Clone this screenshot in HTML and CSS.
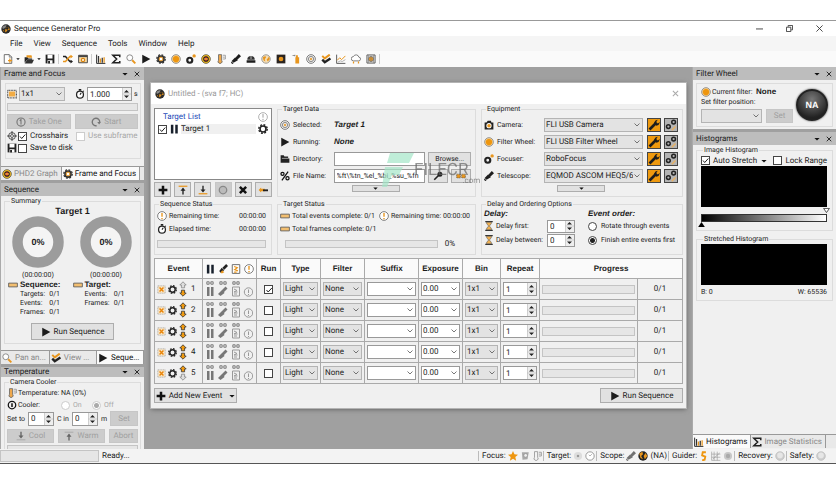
FILE: index.html
```html
<!DOCTYPE html>
<html lang="en">
<head>
<meta charset="utf-8">
<title>Sequence Generator Pro</title>
<link rel="stylesheet" href="styles.css">
</head>
<body>
<svg class="sprite" aria-hidden="true">
  <symbol id="logo" viewBox="0 0 16 16"><circle cx="8" cy="8" r="7.500" fill="#2b2b2b"/><path d="M2 5a7 7 0 0 1 7-3L7 6 3 8z" fill="#888"/><path d="M3 10l4-1 2-4 4 1 1 3-4 1-2 3-4-1z" fill="#e8961e"/><circle cx="10" cy="7" r="2" fill="#222"/><circle cx="5.500" cy="11" r="1.500" fill="#222"/></symbol>
  <symbol id="new" viewBox="0 0 16 16"><path d="M2 1h8l4 4v10H2z" fill="#fff" stroke="#555" stroke-width="1.300"/><path d="M10 1v4h4" fill="none" stroke="#555"/><path d="M11 7v7M8 10.500h6.500" stroke="#e8961e" stroke-width="2"/></symbol>
  <symbol id="open" viewBox="0 0 16 16"><path d="M1 14V5h5l1 2h6v2H5z" fill="#222"/><path d="M4 5V2h8l1 4H8z" fill="#e8961e"/><path d="M5 9h11l-3 6H1z" fill="#333"/></symbol>
  <symbol id="folder" viewBox="0 0 16 16"><path d="M1 14V2h5l1 2h6v3h2v7z" fill="#222"/><path d="M3 7h10" stroke="#ddd"/></symbol>
  <symbol id="save" viewBox="0 0 16 16"><path d="M1 1h14v14H1z" fill="#222"/><path d="M4 1h8v6H4zM4 10h8v5H4z" fill="#fff"/><path d="M5 11h3v4H5z" fill="#222"/></symbol>
  <symbol id="shuffle" viewBox="0 0 16 16"><path d="M0 4h4l7 8h3" fill="none" stroke="#222" stroke-width="2.500"/><path d="M0 12h4l7-8h3" fill="none" stroke="#e8961e" stroke-width="2.500"/><path d="M12 1l4 3-4 3z" fill="#e8961e"/><path d="M12 9l4 3-4 3z" fill="#222"/></symbol>
  <symbol id="options" viewBox="0 0 16 16"><path d="M1 2h14v12H1z" fill="#f6d9a3" stroke="#444" stroke-width="1.500"/><path d="M1 2h14v3H1z" fill="#444"/><circle cx="8" cy="9.500" r="2.600" fill="#fff" stroke="#d98410" stroke-width="2"/></symbol>
  <symbol id="bars" viewBox="0 0 16 16"><path d="M1 1v14h14" fill="none" stroke="#222" stroke-width="1.500"/><path d="M4 14V3M10 14V6" stroke="#333" stroke-width="2"/><path d="M7 14V7M13 14V5" stroke="#e8961e" stroke-width="2"/></symbol>
  <symbol id="sigma" viewBox="0 0 16 16"><path d="M14 5V2H3l6 6-6 6h11v-3" fill="none" stroke="#222" stroke-width="2.500"/></symbol>
  <symbol id="search" viewBox="0 0 16 16"><circle cx="6" cy="6" r="4.700" fill="#fff" stroke="#888" stroke-width="1.500"/><path d="M10 10l5 5" stroke="#e8961e" stroke-width="3"/></symbol>
  <symbol id="play" viewBox="0 0 16 16"><path d="M2 1l13 7-13 7z" fill="#1c1c1c"/></symbol>
  <symbol id="gear" viewBox="0 0 16 16"><circle cx="8" cy="8" r="6.800" fill="none" stroke="#222" stroke-width="2.200" stroke-dasharray="3 2.340"/><circle cx="8" cy="8" r="4.800" fill="none" stroke="#222" stroke-width="2.600"/></symbol>
  <symbol id="gearo" viewBox="0 0 16 16"><circle cx="8" cy="8" r="6.800" fill="none" stroke="#333" stroke-width="2" stroke-dasharray="3 2.340"/><circle cx="8" cy="8" r="4.700" fill="#fff" stroke="#333" stroke-width="3"/><circle cx="8" cy="8" r="3" fill="#fff" stroke="#e8961e" stroke-width="1.600"/></symbol>
  <symbol id="disc" viewBox="0 0 16 16"><circle cx="8" cy="8" r="7" fill="#f5cf90" stroke="#888" stroke-width="1.300"/><circle cx="8" cy="8" r="5" fill="#ee960f"/></symbol>
  <symbol id="focuser" viewBox="0 0 16 16"><circle cx="6" cy="10" r="4" fill="none" stroke="#222" stroke-width="3.500"/><circle cx="13" cy="3" r="2.700" fill="#e8961e"/></symbol>
  <symbol id="phd" viewBox="0 0 16 16"><circle cx="8" cy="8" r="7" fill="#f4b81e" stroke="#554" stroke-width="1.200"/><circle cx="8" cy="8" r="3.600" fill="#d33" stroke="#222" stroke-width="1.800"/><path d="M5 8h6" stroke="#ffd23a" stroke-width="1.600"/></symbol>
  <symbol id="thermo" viewBox="0 0 16 16"><path d="M4 1h5v9l1 3-3.500 2.500L3 13l1-3z" fill="#f0a94c" stroke="#666" stroke-width="1.300"/><path d="M11 2h4M11 5h3M11 8h4M15 2v6" fill="none" stroke="#888" stroke-width="1.200"/></symbol>
  <symbol id="scope" viewBox="0 0 16 16"><path d="M12.500 0L16 3.500 10 9 7 6zM6.500 5.500l4.500 4.500-7 4-3-3zM1 12l3 3-2 1-2-2z" fill="#1d1d1d"/></symbol>
  <symbol id="dome" viewBox="0 0 16 16"><path d="M2 9a6 6 0 0 1 12 0z" fill="#333"/><path d="M8 3v5" stroke="#bbb" stroke-width="1.500"/><path d="M1 10h14v4H1z" fill="#1c1c1c"/></symbol>
  <symbol id="globe" viewBox="0 0 16 16"><circle cx="8" cy="8" r="6.800" fill="#f4ddb5" stroke="#999" stroke-width="1.500"/><path d="M3 5l4-2 1 3-2 2 1 4-3-2zM9 9l4-5 1 4-3 4z" fill="#e8961e"/></symbol>
  <symbol id="earth" viewBox="0 0 16 16"><circle cx="8" cy="8" r="7.500" fill="#222"/><path d="M2 4l5-3 1 4-3 3 3 5-4-2zM9 8l3-5 3 5-4 5z" fill="#e8961e"/></symbol>
  <symbol id="flat" viewBox="0 0 16 16"><path d="M1 1h14v14H1z" fill="#2a2420"/><circle cx="8" cy="8" r="3.700" fill="#e8961e"/></symbol>
  <symbol id="bottle" viewBox="0 0 16 16"><path d="M7 5h6v10H7zM8 2h3v3H8z" fill="#e8961e"/><path d="M1 2l6-1v3z" fill="#888"/></symbol>
  <symbol id="target" viewBox="0 0 16 16"><circle cx="8" cy="8" r="7" fill="#eee" stroke="#666" stroke-width="1.300"/><circle cx="8" cy="8" r="4.200" fill="none" stroke="#777" stroke-width="1.300"/><circle cx="8" cy="8" r="2" fill="#e8a84a"/></symbol>
  <symbol id="checks" viewBox="0 0 16 16"><path d="M2 9l4 4 9-6" fill="none" stroke="#222" stroke-width="3.800"/><path d="M2 3l4 4 8-6" fill="none" stroke="#e8961e" stroke-width="3.200"/></symbol>
  <symbol id="graph" viewBox="0 0 16 16"><path d="M1 1v14h14" fill="none" stroke="#555" stroke-width="1.500"/><path d="M2 10l4-4 3 3 6-6" fill="none" stroke="#e8961e" stroke-width="1.600"/><path d="M3 13l4-2 3 1 5-3" fill="none" stroke="#888"/></symbol>
  <symbol id="cloud" viewBox="0 0 16 16"><path d="M4 11a3.500 3.500 0 0 1 0-7 4.500 4.500 0 0 1 8.500 1A3 3 0 0 1 12 11z" fill="#fff" stroke="#666" stroke-width="1.300"/><path d="M4 12v3M12 12v3" stroke="#e8961e" stroke-width="2"/></symbol>
  <symbol id="safe" viewBox="0 0 16 16"><path d="M1.500 1.500h13v13h-13z" fill="#eee" stroke="#555" stroke-width="1.500"/><circle cx="8" cy="8" r="4" fill="#e8961e" stroke="#777" stroke-width="1.500"/><path d="M8 4v8M4 2v12M12 2v12" stroke="#777"/></symbol>
  <symbol id="chip" viewBox="0 0 16 16"><path d="M1 2h14v12H1z" fill="none" stroke="#555" stroke-width="2" stroke-dasharray="1.500 1"/><path d="M3 4h10v8H3z" fill="#f2ac45"/></symbol>
  <symbol id="watch" viewBox="0 0 16 16"><circle cx="8" cy="9" r="5.500" fill="#fff" stroke="#222" stroke-width="2"/><path d="M8 9l2-3M6 1h4M8 1v2M13 3l1 1" stroke="#222" stroke-width="1.800"/></symbol>
  <symbol id="one" viewBox="0 0 16 16"><circle cx="8" cy="8" r="6.500" fill="none" stroke="#777" stroke-width="1.800"/><path d="M6 6l2-2v8" fill="none" stroke="#777" stroke-width="1.700"/></symbol>
  <symbol id="loop" viewBox="0 0 16 16"><path d="M9 14a6 6 0 1 1 5-6" fill="none" stroke="#777" stroke-width="2.200"/><path d="M10 8h6l-3 4z" fill="#777"/></symbol>
  <symbol id="cross" viewBox="0 0 16 16"><circle cx="8" cy="8" r="5.500" fill="none" stroke="#333" stroke-width="1.300"/><circle cx="8" cy="8" r="2.300" fill="none" stroke="#333"/><path d="M8 0v6M8 10v6M0 8h6M10 8h6" stroke="#333" stroke-width="1.300"/></symbol>
  <symbol id="close" viewBox="0 0 16 16"><path d="M2 2l12 12M14 2L2 14" stroke="currentColor" stroke-width="2.400"/></symbol>
  <symbol id="down" viewBox="0 0 16 16"><path d="M1 5h14l-7 7z" fill="#111"/></symbol>
  <symbol id="event" viewBox="0 0 16 16"><path d="M1 5h14v6H1z" fill="#f3bf70" stroke="#555" stroke-width="1.300"/></symbol>
  <symbol id="alert" viewBox="0 0 16 16"><circle cx="8" cy="8" r="7" fill="none" stroke="#999" stroke-width="1.200"/><path d="M8 3v6M8 11v2" stroke="#999" stroke-width="1.500"/></symbol>
  <symbol id="alerto" viewBox="0 0 16 16"><circle cx="8" cy="8" r="7" fill="#fff" stroke="#666" stroke-width="1.300"/><path d="M8 3v6M8 11v2" stroke="#e8961e" stroke-width="2.200"/></symbol>
  <symbol id="pause" viewBox="0 0 16 16"><path d="M3 1h4v14H3zM10 1h4v14h-4z" fill="#18202c"/></symbol>
  <symbol id="plus" viewBox="0 0 16 16"><path d="M8 1v14M1 8h14" stroke="#111" stroke-width="4"/></symbol>
  <symbol id="times" viewBox="0 0 16 16"><path d="M3 3l10 10M13 3L3 13" stroke="#111" stroke-width="4"/></symbol>
  <symbol id="totop" viewBox="0 0 16 16"><path d="M1 2h14" stroke="#e8961e" stroke-width="2"/><path d="M8 15V6" stroke="#222" stroke-width="2.200"/><path d="M4 9l4-5 4 5z" fill="#222"/></symbol>
  <symbol id="tobottom" viewBox="0 0 16 16"><path d="M1 14h14" stroke="#e8961e" stroke-width="2"/><path d="M8 1v8" stroke="#222" stroke-width="2.200"/><path d="M4 7l4 5 4-5z" fill="#222"/></symbol>
  <symbol id="ring" viewBox="0 0 16 16"><circle cx="8" cy="8" r="6" fill="#bbb" stroke="#888" stroke-width="2"/></symbol>
  <symbol id="rename" viewBox="0 0 16 16"><path d="M1 8l4-4v8z" fill="#e8961e"/><path d="M4 6h7v4H4z" fill="#e8961e"/><path d="M8 7h8v3H8z" fill="#222"/></symbol>
  <symbol id="percent" viewBox="0 0 16 16"><circle cx="4" cy="4.500" r="2.500" fill="none" stroke="#111" stroke-width="2"/><circle cx="12" cy="11.500" r="2.500" fill="none" stroke="#111" stroke-width="2"/><path d="M13 1L3 15" stroke="#111" stroke-width="2"/></symbol>
  <symbol id="camera" viewBox="0 0 16 16"><path d="M1 4h3l2-3h5l1 3h3v11H1z" fill="#222"/><circle cx="8" cy="9" r="4.200" fill="#fff"/><circle cx="8" cy="9" r="2.800" fill="#e8961e"/></symbol>
  <symbol id="wrench" viewBox="0 0 16 16"><path d="M2 14l8-8" stroke="#1d1d1d" stroke-width="3.500"/><path d="M13 1l-3 1-2 3 3 4 3-1 2-4-3 2-2-2z" fill="#1d1d1d"/></symbol>
  <symbol id="gears" viewBox="0 0 16 16"><circle cx="11.500" cy="4" r="2.500" fill="none" stroke="#222" stroke-width="2"/><circle cx="4.500" cy="10" r="2.500" fill="none" stroke="#222" stroke-width="2"/><path d="M9 15l5-5" stroke="#e8b060" stroke-width="2"/></symbol>
  <symbol id="hourglass" viewBox="0 0 16 16"><path d="M2 1h12M2 15h12" stroke="#333" stroke-width="2"/><path d="M4 2h8c0 4-3 4-3 6s3 2 3 6H4c0-4 3-4 3-6S4 6 4 2z" fill="#f0b050" stroke="#555"/></symbol>
  <symbol id="script" viewBox="0 0 16 16"><path d="M2 1h12v14H2z" fill="#fff" stroke="#666" stroke-width="1.500"/><path d="M5 4l5 2-4 3 5 2M5 13h4" fill="none" stroke="#e8961e" stroke-width="2"/></symbol>
  <symbol id="slew" viewBox="0 0 16 16"><path d="M13 0l3 3-6 6-3-3zM6 6l4 4-6 4-2-3z" fill="#222"/><path d="M7 10l3 3-4 2-2-2z" fill="#e8961e"/></symbol>
  <symbol id="del" viewBox="0 0 16 16"><path d="M1.500 1.500h13v13h-13z" fill="#fbe8c8" stroke="#888" stroke-dasharray="2 1"/><path d="M4.500 4.500l7 7M11.500 4.500l-7 7" stroke="#e8850a" stroke-width="2.600"/></symbol>
  <symbol id="updown" viewBox="0 0 10 20"><path d="M5 1L1 5h2v3.500h4V5h2zM5 19l4-4H7v-3.500H3V15H1z" fill="#f09a10" stroke="#333"/></symbol>
  <symbol id="onlydown" viewBox="0 0 10 20"><path d="M5 1L1 5h2v3.500h4V5h2z" fill="#ddd" stroke="#888"/><path d="M5 19l4-4H7v-3.500H3V15H1z" fill="#f09a10" stroke="#333"/></symbol>
  <symbol id="onlyup" viewBox="0 0 10 20"><path d="M5 1L1 5h2v3.500h4V5h2z" fill="#f09a10" stroke="#333"/><path d="M5 19l4-4H7v-3.500H3V15H1z" fill="#ddd" stroke="#888"/></symbol>
  <symbol id="flags" viewBox="0 0 48 16">
    <g fill="none" stroke="#888" stroke-width="1.200"><circle cx="3" cy="2" r="1.300"/><circle cx="7" cy="2" r="1.300"/><circle cx="16" cy="2" r="1.300"/><circle cx="20" cy="2" r="1.300"/><circle cx="29" cy="2" r="1.300"/><circle cx="33" cy="2" r="1.300"/></g>
    <path d="M2 6h2.500v9H2zM6 6h2.500v9H6zM20.500 5.500l2 2-3.500 3.500 .5 1-4 3-2.500-2 4-4z" fill="#777"/>
    <path d="M27.500 6h7v9h-7zM29 8l3 1.500-3 1.500h3.500M29 13h3" fill="none" stroke="#999"/>
    <circle cx="43.500" cy="11" r="4.200" fill="none" stroke="#999"/><path d="M43.500 8.500V12M43.500 13v1" stroke="#999"/></symbol>
  <symbol id="star" viewBox="0 0 16 16"><path d="M8 0l2.300 5.300 5.700.5-4.300 3.800 1.300 5.900L8 12.400l-5 3.100 1.300-5.900L0 5.800l5.700-.5z" fill="#ee960f"/></symbol>
  <symbol id="graycam" viewBox="0 0 16 16"><path d="M3 2h11l-2 11-8 1z" fill="#aaa"/><circle cx="9" cy="7" r="3" fill="#eee" stroke="#888"/></symbol>
  <symbol id="graythermo" viewBox="0 0 16 16"><path d="M4 1h5v9l1 3-3.500 2.500L3 13l1-3zM11 2h4v6h-4M11 5h3" fill="none" stroke="#999" stroke-width="1.400"/></symbol>
  <symbol id="graydot" viewBox="0 0 16 16"><circle cx="8" cy="8" r="6.500" fill="#ddd"/><circle cx="8" cy="8" r="2" fill="#999"/></symbol>
  <symbol id="graystar" viewBox="0 0 16 16"><circle cx="8" cy="8" r="6.500" fill="#c8c8c8"/><circle cx="8" cy="8" r="3.500" fill="#aaa"/></symbol>
  <symbol id="clock" viewBox="0 0 16 16"><circle cx="8" cy="8" r="6.700" fill="#fff" stroke="#888" stroke-width="1.300"/><path d="M8 8l3-3M8 8L6 6" stroke="#888"/></symbol>
  <symbol id="guide" viewBox="0 0 16 16"><path d="M11 2H6l-1 5 5 2-1 5-4 1" fill="none" stroke="#ee960f" stroke-width="3"/></symbol>
  <symbol id="grid" viewBox="0 0 16 16"><path d="M1 1v14h14M1 5h14M1 10h14M5 1v14M10 1v14M3 13L14 3" fill="none" stroke="#999"/></symbol>
  <symbol id="lamp" viewBox="0 0 16 16"><circle cx="8" cy="8" r="7" fill="#ccc" stroke="#bbb"/><circle cx="8" cy="7" r="4.500" fill="#e6e6e6"/></symbol>
  <symbol id="power" viewBox="0 0 16 16"><circle cx="8" cy="8" r="6" fill="none" stroke="#111" stroke-width="2"/><path d="M8 5v6" stroke="#111" stroke-width="2.400"/></symbol>
  <symbol id="tool" viewBox="0 0 16 16"><path d="M2 14l8-8" stroke="#222" stroke-width="2.500"/><circle cx="11" cy="5" r="4" fill="#222"/></symbol>
  <symbol id="glasses" viewBox="0 0 16 16"><path d="M1 5h6v6H1zM9 5h6v6H9z" fill="#e8961e" stroke="#555" stroke-dasharray="2 1"/></symbol>
  <symbol id="donut" viewBox="0 0 52 52"><circle cx="26" cy="26" r="20.500" fill="#f4f4f4" stroke="#9c9c9c" stroke-width="10.500"/></symbol>
</svg>

<div class="app">
  <header class="titlebar">
    <svg class="ic"><use href="#logo"/></svg><h1>Sequence Generator Pro</h1>
    <div class="winbtns">
      <button aria-label="Minimize"><svg viewBox="0 0 8 8"><path d="M0 4.500h8" stroke="#333"/></svg></button>
      <button aria-label="Restore"><svg viewBox="0 0 8 8"><path d="M.5 2.500h5v5h-5zM2.500 2V.5h5v5H6" fill="none" stroke="#333"/></svg></button>
      <button aria-label="Close"><svg viewBox="0 0 8 8"><path d="M.5.5l7 7M7.500.5l-7 7" stroke="#333"/></svg></button>
    </div>
  </header>
  <nav class="menu"><a href="#">File</a><a href="#">View</a><a href="#">Sequence</a><a href="#">Tools</a><a href="#">Window</a><a href="#">Help</a></nav>
  <div class="toolbar">
    <button aria-label="New"><svg class="ic"><use href="#new"/></svg></button><button class="drop" aria-label="New menu"><svg><use href="#down"/></svg></button>
    <button aria-label="Open"><svg class="ic"><use href="#open"/></svg></button><button class="drop" aria-label="Open menu"><svg><use href="#down"/></svg></button>
    <button aria-label="Save"><svg class="ic"><use href="#save"/></svg></button><i class="sep"></i>
    <button aria-label="Equipment"><svg class="ic"><use href="#shuffle"/></svg></button>
    <button aria-label="Options"><svg class="ic"><use href="#options"/></svg></button><i class="sep"></i>
    <button aria-label="Histogram"><svg class="ic"><use href="#bars"/></svg></button>
    <button aria-label="Statistics"><svg class="ic"><use href="#sigma"/></svg></button>
    <button aria-label="Zoom"><svg class="ic"><use href="#search"/></svg></button>
    <button aria-label="Run"><svg class="ic"><use href="#play"/></svg></button>
    <button aria-label="Frame and focus"><svg class="ic"><use href="#gearo"/></svg></button>
    <button aria-label="Filter wheel"><svg class="ic"><use href="#disc"/></svg></button>
    <button aria-label="Focuser"><svg class="ic"><use href="#focuser"/></svg></button>
    <button aria-label="PHD2"><svg class="ic"><use href="#phd"/></svg></button>
    <button aria-label="Temperature"><svg class="ic"><use href="#thermo"/></svg></button>
    <button aria-label="Telescope"><svg class="ic"><use href="#scope"/></svg></button>
    <button aria-label="Observatory"><svg class="ic"><use href="#dome"/></svg></button>
    <button aria-label="Rotator"><svg class="ic"><use href="#globe"/></svg></button>
    <button aria-label="Flat box"><svg class="ic"><use href="#flat"/></svg></button>
    <button aria-label="Dew heater"><svg class="ic"><use href="#bottle"/></svg></button>
    <button aria-label="Target"><svg class="ic"><use href="#target"/></svg></button>
    <button aria-label="View"><svg class="ic"><use href="#checks"/></svg></button>
    <button aria-label="Graph"><svg class="ic"><use href="#graph"/></svg></button>
    <button aria-label="Weather"><svg class="ic"><use href="#cloud"/></svg></button>
    <button aria-label="Safety"><svg class="ic"><use href="#safe"/></svg></button><i class="sep"></i>
  </div>

  <main class="work">
    <aside class="dock">
      <section class="pane">
        <h2 class="cap">Frame and Focus <button aria-label="Pane menu"><svg><use href="#down"/></svg></button><button aria-label="Close pane"><svg><use href="#close"/></svg></button></h2>
        <div class="frame box">
          <div class="line top"><svg class="ic"><use href="#chip"/></svg><select class="bin" aria-label="Binning"><option>1x1</option></select><svg class="ic"><use href="#watch"/></svg><input class="exp" type="number" step="any" value="1.000" aria-label="Exposure"><span>s</span></div>
          <progress value="0" max="1"></progress>
          <div class="pair"><button class="btn off" disabled><svg class="ic"><use href="#one"/></svg>Take One</button><button class="btn off" disabled><svg class="ic"><use href="#loop"/></svg>Start</button></div>
          <div class="checks"><svg class="ic"><use href="#cross"/></svg><label><input type="checkbox" checked>Crosshairs</label><label class="dim"><input type="checkbox" disabled>Use subframe</label></div>
          <div class="checks"><svg class="ic"><use href="#save"/></svg><label><input type="checkbox">Save to disk</label></div>
        </div>
        <div class="tabs"><button><svg class="ic"><use href="#phd"/></svg>PHD2 Graph</button><button class="on"><svg class="ic"><use href="#gearo"/></svg>Frame and Focus</button></div>
      </section>
      <section class="pane">
        <h2 class="cap">Sequence <button aria-label="Pane menu"><svg><use href="#down"/></svg></button><button aria-label="Close pane"><svg><use href="#close"/></svg></button></h2>
        <fieldset class="summary"><legend>Summary</legend>
          <h3>Target 1</h3>
          <div class="dials">
            <figure><div class="dial"><svg><use href="#donut"/></svg><b>0%</b></div><figcaption>(00:00:00)</figcaption></figure>
            <figure><div class="dial"><svg><use href="#donut"/></svg><b>0%</b></div><figcaption>(00:00:00)</figcaption></figure>
          </div>
          <div class="counts">
            <dl><dt><svg class="ic"><use href="#event"/></svg>Sequence:</dt><dd>Targets: <span>0/1</span></dd><dd>Events: <span>0/1</span></dd><dd>Frames: <span>0/1</span></dd></dl>
            <dl><dt><svg class="ic"><use href="#event"/></svg>Target:</dt><dd>Events: <span>0/1</span></dd><dd>Frames: <span>0/1</span></dd></dl>
          </div>
          <button class="btn run"><svg class="ic"><use href="#play"/></svg>Run Sequence</button>
        </fieldset>
        <div class="tabs three"><button><svg class="ic"><use href="#search"/></svg>Pan an...</button><button><svg class="ic"><use href="#checks"/></svg>View ...</button><button class="on"><svg class="ic"><use href="#play"/></svg>Seque...</button></div>
      </section>
      <section class="pane last">
        <h2 class="cap">Temperature <button aria-label="Pane menu"><svg><use href="#down"/></svg></button><button aria-label="Close pane"><svg><use href="#close"/></svg></button></h2>
        <fieldset class="temp"><legend>Camera Cooler</legend>
          <div class="line"><svg class="ic"><use href="#thermo"/></svg>Temperature: NA (0%)</div>
          <div class="line cooler"><svg class="ic"><use href="#power"/></svg><span>Cooler:</span><label class="dim"><input type="radio" name="cool" disabled>On</label><label class="dim"><input type="radio" name="cool" disabled checked>Off</label></div>
          <div class="line set"><label for="deg">Set to</label><input id="deg" type="number" value="0"><label for="mins">C in</label><input id="mins" type="number" value="0"><span>m</span><button class="btn off" disabled>Set</button></div>
          <div class="trio"><button class="btn off" disabled><svg class="ic gray"><use href="#tobottom"/></svg>Cool</button><button class="btn off" disabled><svg class="ic gray"><use href="#totop"/></svg>Warm</button><button class="btn off" disabled>Abort</button></div>
          <progress value="0" max="1"></progress>
        </fieldset>
      </section>
    </aside>

    <div class="desktop">
      <article class="win">
        <header><svg class="ic"><use href="#logo"/></svg><h2>Untitled - (sva f7; HC)</h2><button aria-label="Close sequence"><svg><use href="#close"/></svg></button></header>
        <div class="body">
          <div class="cols upper">
            <div class="targets">
              <div class="list">
                <div class="lhead"><span>Target List</span><svg class="ic"><use href="#alert"/></svg></div>
                <div class="litem"><input type="checkbox" checked aria-label="Enable Target 1"><svg class="ic"><use href="#pause"/></svg><span>Target 1</span><svg class="ic"><use href="#gear"/></svg></div>
              </div>
              <div class="lbtns"><button class="btn" aria-label="Add"><svg class="ic"><use href="#plus"/></svg></button><button class="btn" aria-label="Move up"><svg class="ic"><use href="#totop"/></svg></button><button class="btn" aria-label="Move down"><svg class="ic"><use href="#tobottom"/></svg></button><button class="btn off" aria-label="Reset" disabled><svg class="ic"><use href="#ring"/></svg></button><button class="btn" aria-label="Delete"><svg class="ic"><use href="#times"/></svg></button><button class="btn" aria-label="Rename"><svg class="ic"><use href="#rename"/></svg></button></div>
            </div>
            <fieldset class="data"><legend>Target Data</legend>
              <div class="row"><svg class="ic"><use href="#target"/></svg><span>Selected:</span><em>Target 1</em></div>
              <div class="row"><svg class="ic"><use href="#play"/></svg><span>Running:</span><em>None</em></div>
              <div class="row"><svg class="ic"><use href="#folder"/></svg><label for="dir">Directory:</label><input id="dir" type="text"><button class="btn browse">Browse...</button></div>
              <div class="row"><svg class="ic"><use href="#percent"/></svg><label for="fname">File Name:</label><input id="fname" type="text" value="%ft\%tn_%el_%bi_%su_%fn"><button class="btn sq" aria-label="Pattern key"><svg class="ic"><use href="#tool"/></svg></button><button class="btn sq" aria-label="Preview"><svg class="ic"><use href="#glasses"/></svg></button></div>
              <button class="btn more" aria-label="More target data"><svg><use href="#down"/></svg></button>
              <div class="mark"><svg viewBox="0 0 32 34"><path d="M8 0h24l-5 10H5zM3 14h18l-4 8H10L5 34H0z" fill="#a5e6c8"/></svg><strong>FILECR</strong><small>.com</small></div>
            </fieldset>
            <fieldset class="equip"><legend>Equipment</legend>
              <div class="row"><svg class="ic"><use href="#camera"/></svg><label for="cam">Camera:</label><select id="cam"><option>FLI USB Camera</option></select><button class="key" aria-label="Camera settings"><svg><use href="#wrench"/></svg></button><button class="cog" aria-label="Camera profile"><svg><use href="#gears"/></svg></button></div>
              <div class="row"><svg class="ic"><use href="#disc"/></svg><label for="fw">Filter Wheel:</label><select id="fw"><option>FLI USB Filter Wheel</option></select><button class="key" aria-label="Filter wheel settings"><svg><use href="#wrench"/></svg></button><button class="cog" aria-label="Filter wheel profile"><svg><use href="#gears"/></svg></button></div>
              <div class="row"><svg class="ic"><use href="#focuser"/></svg><label for="foc">Focuser:</label><select id="foc"><option>RoboFocus</option></select><button class="key" aria-label="Focuser settings"><svg><use href="#wrench"/></svg></button><button class="cog" aria-label="Focuser profile"><svg><use href="#gears"/></svg></button></div>
              <div class="row"><svg class="ic"><use href="#scope"/></svg><label for="tel">Telescope:</label><select id="tel"><option>EQMOD ASCOM HEQ5/6</option></select><button class="key" aria-label="Telescope settings"><svg><use href="#wrench"/></svg></button><button class="cog" aria-label="Telescope profile"><svg><use href="#gears"/></svg></button></div>
              <button class="btn more" aria-label="More equipment"><svg><use href="#down"/></svg></button>
            </fieldset>
          </div>
          <div class="cols lower">
            <fieldset class="status"><legend>Sequence Status</legend>
              <div class="stat"><svg class="ic"><use href="#alerto"/></svg><span>Remaining time:</span><span class="end">00:00:00</span></div>
              <div class="stat"><svg class="ic"><use href="#watch"/></svg><span>Elapsed time:</span><span class="end">00:00:00</span></div>
              <progress value="0" max="1"></progress>
            </fieldset>
            <fieldset class="status"><legend>Target Status</legend>
              <div class="stat"><svg class="ic"><use href="#event"/></svg><span>Total events complete: 0/1</span><svg class="ic end"><use href="#alerto"/></svg><span>Remaining time: 00:00:00</span></div>
              <div class="stat"><svg class="ic"><use href="#event"/></svg><span>Total frames complete: 0/1</span></div>
              <div class="prog"><progress value="0" max="1"></progress><span>0%</span></div>
            </fieldset>
            <fieldset class="delay"><legend>Delay and Ordering Options</legend>
              <div><h4>Delay:</h4>
                <div class="drow"><svg class="ic"><use href="#hourglass"/></svg><label for="d1">Delay first:</label><input id="d1" type="number" value="0"></div>
                <div class="drow"><svg class="ic"><use href="#hourglass"/></svg><label for="d2">Delay between:</label><input id="d2" type="number" value="0"></div></div>
              <div><h4>Event order:</h4>
                <label class="drow"><input type="radio" name="order">Rotate through events</label>
                <label class="drow"><input type="radio" name="order" checked>Finish entire events first</label></div>
            </fieldset>
          </div>
          <table>
            <colgroup><col class="c-ev"><col class="c-fl"><col class="c-run"><col class="c-type"><col class="c-fil"><col class="c-suf"><col class="c-exp"><col class="c-bin"><col class="c-rep"><col><col class="c-num"></colgroup>
            <thead><tr><th>Event</th><th><div class="hic"><svg class="ic"><use href="#pause"/></svg><svg class="ic"><use href="#slew"/></svg><svg class="ic"><use href="#script"/></svg><svg class="ic"><use href="#alerto"/></svg></div></th><th>Run</th><th>Type</th><th>Filter</th><th>Suffix</th><th>Exposure</th><th>Bin</th><th>Repeat</th><th colspan="2">Progress</th></tr></thead>
            <tbody>
              <tr><td><div class="ev"><svg class="ic"><use href="#del"/></svg><svg class="ic"><use href="#gear"/></svg><svg class="ud"><use href="#onlydown"/></svg>1</div></td><td><svg class="flags"><use href="#flags"/></svg></td><td><input type="checkbox" checked aria-label="Run event 1"></td><td><select aria-label="Type 1"><option>Light</option></select></td><td><select aria-label="Filter 1"><option>None</option></select></td><td><select class="w" aria-label="Suffix 1"><option></option></select></td><td><select class="w" aria-label="Exposure 1"><option>0.00</option></select></td><td><select aria-label="Bin 1"><option>1x1</option></select></td><td><input type="number" value="1" aria-label="Repeat 1"></td><td><progress value="0" max="1"></progress></td><td>0/1</td></tr>
              <tr><td><div class="ev"><svg class="ic"><use href="#del"/></svg><svg class="ic"><use href="#gear"/></svg><svg class="ud"><use href="#updown"/></svg>2</div></td><td><svg class="flags"><use href="#flags"/></svg></td><td><input type="checkbox" aria-label="Run event 2"></td><td><select aria-label="Type 2"><option>Light</option></select></td><td><select aria-label="Filter 2"><option>None</option></select></td><td><select class="w" aria-label="Suffix 2"><option></option></select></td><td><select class="w" aria-label="Exposure 2"><option>0.00</option></select></td><td><select aria-label="Bin 2"><option>1x1</option></select></td><td><input type="number" value="1" aria-label="Repeat 2"></td><td><progress value="0" max="1"></progress></td><td>0/1</td></tr>
              <tr><td><div class="ev"><svg class="ic"><use href="#del"/></svg><svg class="ic"><use href="#gear"/></svg><svg class="ud"><use href="#updown"/></svg>3</div></td><td><svg class="flags"><use href="#flags"/></svg></td><td><input type="checkbox" aria-label="Run event 3"></td><td><select aria-label="Type 3"><option>Light</option></select></td><td><select aria-label="Filter 3"><option>None</option></select></td><td><select class="w" aria-label="Suffix 3"><option></option></select></td><td><select class="w" aria-label="Exposure 3"><option>0.00</option></select></td><td><select aria-label="Bin 3"><option>1x1</option></select></td><td><input type="number" value="1" aria-label="Repeat 3"></td><td><progress value="0" max="1"></progress></td><td>0/1</td></tr>
              <tr><td><div class="ev"><svg class="ic"><use href="#del"/></svg><svg class="ic"><use href="#gear"/></svg><svg class="ud"><use href="#updown"/></svg>4</div></td><td><svg class="flags"><use href="#flags"/></svg></td><td><input type="checkbox" aria-label="Run event 4"></td><td><select aria-label="Type 4"><option>Light</option></select></td><td><select aria-label="Filter 4"><option>None</option></select></td><td><select class="w" aria-label="Suffix 4"><option></option></select></td><td><select class="w" aria-label="Exposure 4"><option>0.00</option></select></td><td><select aria-label="Bin 4"><option>1x1</option></select></td><td><input type="number" value="1" aria-label="Repeat 4"></td><td><progress value="0" max="1"></progress></td><td>0/1</td></tr>
              <tr><td><div class="ev"><svg class="ic"><use href="#del"/></svg><svg class="ic"><use href="#gear"/></svg><svg class="ud"><use href="#onlyup"/></svg>5</div></td><td><svg class="flags"><use href="#flags"/></svg></td><td><input type="checkbox" aria-label="Run event 5"></td><td><select aria-label="Type 5"><option>Light</option></select></td><td><select aria-label="Filter 5"><option>None</option></select></td><td><select class="w" aria-label="Suffix 5"><option></option></select></td><td><select class="w" aria-label="Exposure 5"><option>0.00</option></select></td><td><select aria-label="Bin 5"><option>1x1</option></select></td><td><input type="number" value="1" aria-label="Repeat 5"></td><td><progress value="0" max="1"></progress></td><td>0/1</td></tr>
            </tbody>
          </table>
          <footer><button class="btn add"><svg class="ic"><use href="#plus"/></svg>Add New Event<svg class="tri"><use href="#down"/></svg></button><button class="btn run"><svg class="ic"><use href="#play"/></svg>Run Sequence</button></footer>
        </div>
      </article>
    </div>

    <aside class="dock right">
      <section class="pane">
        <h2 class="cap">Filter Wheel <button aria-label="Pane menu"><svg><use href="#down"/></svg></button><button aria-label="Close pane"><svg><use href="#close"/></svg></button></h2>
        <div class="box wheel">
          <div><div class="cur"><svg class="ic"><use href="#disc"/></svg>Current filter: <b>None</b></div><label for="pos">Set filter position:</label><div class="setpos"><select id="pos"><option></option></select><button class="btn off" disabled>Set</button></div></div>
          <div class="knob">NA</div>
        </div>
      </section>
      <section class="pane last">
        <h2 class="cap">Histograms <button aria-label="Pane menu"><svg><use href="#down"/></svg></button><button aria-label="Close pane"><svg><use href="#close"/></svg></button></h2>
        <fieldset class="hist"><legend>Image Histogram</legend>
          <div class="opts"><label><input type="checkbox" checked>Auto Stretch</label><svg class="tri"><use href="#down"/></svg><label class="end"><input type="checkbox">Lock Range</label></div>
          <div class="plot"></div>
          <svg class="wht" viewBox="0 0 8 6"><path d="M.5.5h7L4 5.500z" fill="#fff" stroke="#333"/></svg>
          <div class="ramp"></div>
          <svg class="blk" viewBox="0 0 8 6"><path d="M4 0l4 6H0z"/></svg>
        </fieldset>
        <fieldset class="hist"><legend>Stretched Histogram</legend>
          <div class="plot"></div>
          <div class="bw"><span>B: 0</span><span>W: 65536</span></div>
        </fieldset>
        <div class="tabs foot"><button class="on"><svg class="ic"><use href="#bars"/></svg>Histograms</button><button><svg class="ic"><use href="#sigma"/></svg>Image Statistics</button></div>
      </section>
    </aside>
  </main>

  <footer class="statusbar">
    <progress value="0" max="1"></progress><span class="ready">Ready...</span>
    <div>Focus: <svg class="ic"><use href="#star"/></svg><svg class="ic"><use href="#graycam"/></svg><svg class="ic"><use href="#graythermo"/></svg></div>
    <div>Target: <svg class="ic"><use href="#graydot"/></svg><svg class="ic"><use href="#clock"/></svg></div>
    <div>Scope: <svg class="ic gray"><use href="#scope"/></svg><svg class="ic"><use href="#earth"/></svg>(NA)</div>
    <div>Guider: <svg class="ic"><use href="#guide"/></svg><svg class="ic"><use href="#grid"/></svg><svg class="ic"><use href="#graystar"/></svg></div>
    <div>Recovery: <svg class="ic"><use href="#lamp"/></svg></div>
    <div>Safety: <svg class="ic"><use href="#lamp"/></svg></div>
  </footer>
</div>
</body>
</html>
```
FILE: styles.css
```css
* { box-sizing: border-box; margin: 0; padding: 0; }
:root {
  --ui: Roboto, "Open Sans", sans-serif;
  --form: Roboto, "Liberation Sans", sans-serif;
  --face: #f0f0f0;
  --line: #dcdcdc;
}
html, body { height: 100%; }
body { padding: 20px 0; background: #fff; color: #1c1c1c; font: 7px/10px var(--form); text-rendering: geometricPrecision; }
.sprite { position: absolute; width: 0; height: 0; }
svg { display: block; }
.ic { width: 10px; height: 10px; flex: none; }
.gray { filter: grayscale(1); opacity: .6; }
button, input, select { font: 8px/10px var(--form); color: inherit; border: 0; background: none; border-radius: 0; outline: 0; text-rendering: geometricPrecision; }
fieldset { border: 1px solid var(--line); min-width: 0; }
legend { margin-left: 2px; padding: 0 1px; }
a { color: inherit; text-decoration: none; }

.app { height: 100%; display: flex; flex-direction: column; border-top: 1px solid #999; border-bottom: 1px solid #555; background: var(--face); }
.titlebar { display: flex; align-items: center; gap: 3px; height: 15px; padding-left: 1px; background: #fff; font-family: var(--ui); }
.titlebar h1 { font-size: 8px; font-weight: 400; }
.winbtns { margin-left: auto; display: flex; gap: 23px; padding-right: 13px; }
.winbtns svg { width: 7px; height: 7px; }
.menu { display: flex; gap: 11px; height: 15px; align-items: center; padding-left: 10px; background: #f5f5f5; font: 8px/10px var(--ui); }
.toolbar { display: flex; align-items: center; height: 16px; background: #fafafa; }
.toolbar button { width: 15px; display: flex; justify-content: center; }
.toolbar .drop { width: 6px; }
.toolbar .drop svg { width: 4px; height: 4px; }
.toolbar .sep { width: 1px; height: 10px; margin: 0 1px; background: #ccc; }

.work { flex: 1; min-height: 0; display: grid; grid-template-columns: 144px minmax(0, 1fr) 144px; background: #a0a0a0; }
.dock { display: flex; flex-direction: column; gap: 3px; min-height: 0; border-left: 1px solid #aaa; }
.pane { display: flex; flex-direction: column; background: var(--face); }
.pane.last { flex: 1; min-height: 0; overflow: hidden; }
.cap { display: flex; align-items: center; gap: 6px; height: 13px; padding: 0 4px 0 3px; background: #bdbdbd; font: 8px/10px var(--ui); }
.cap button:first-of-type { margin-left: auto; }
.cap svg { width: 6px; height: 6px; }
.tabs { display: flex; height: 14px; background: #e9e9e9; border-top: 1px solid #999; }
.tabs button { display: flex; align-items: center; gap: 2px; padding: 0 3px 0 1px; color: #888; border-right: 1px solid #999; white-space: nowrap; }
.tabs .on { color: #111; background: #fafafa; }
.tabs.three button { flex: 1; gap: 3px; }

.btn { display: flex; align-items: center; justify-content: center; gap: 3px; height: 15px; background: #e1e1e1; border: 1px solid #adadad; white-space: nowrap; }
.btn.off { background: #ccc; border-color: #c6c6c6; color: #a0a0a0; }
progress { appearance: none; display: block; width: 100%; height: 8px; border: 1px solid #c4c4c4; background: #e6e6e6; }
progress::-webkit-progress-bar { background: #e6e6e6; }
select { appearance: none; height: 14px; padding: 0 9px 0 1px; border: 1px solid #b4b4b4; text-overflow: clip;
  background: #e3e3e3 url("data:image/svg+xml,%3Csvg xmlns='http://www.w3.org/2000/svg' viewBox='0 0 6 4'%3E%3Cpath d='M.5.500 3 3 5.500.500' fill='none' stroke='%23555' stroke-width='.8'/%3E%3C/svg%3E") no-repeat right 2px center / 6px 4px; }
select.w { background-color: #fff; border-color: #999; }
input[type=number], input[type=text] { height: 14px; min-width: 0; padding-left: 2px; background: #fff; border: 1px solid #999; }
input[type=text] { font-size: 7px; }
input[type=number]::-webkit-inner-spin-button { appearance: none; opacity: 1; width: 9px; height: 12px;
  background: #eee url("data:image/svg+xml,%3Csvg xmlns='http://www.w3.org/2000/svg' viewBox='0 0 9 12'%3E%3Cpath d='M4.500 2 7 4.500H2zM4.500 10 7 7.500H2z' fill='%23222'/%3E%3Cpath d='M0 6h9M.500 0v12' stroke='%23bbb' stroke-width='.6'/%3E%3C/svg%3E") no-repeat center; }
input[type=checkbox], input[type=radio] { appearance: none; flex: none; width: 9px; height: 9px; background: #fff; border: 1px solid #444; }
input[type=radio] { border-radius: 50%; }
input[type=radio]:checked { background: radial-gradient(circle, #222 2px, #fff 3px); }
input[type=checkbox]:checked { background: #fff url("data:image/svg+xml,%3Csvg xmlns='http://www.w3.org/2000/svg' viewBox='0 0 8 8'%3E%3Cpath d='M1.500 4 3.200 6 6.800 2' fill='none' stroke='%23222'/%3E%3C/svg%3E") center / 8px 8px; }
label { display: flex; align-items: center; gap: 3px; white-space: nowrap; }
.dim { color: #a8a8a8; }
.dim input { border-color: #ccc; }
.dim input[type=radio]:checked { background: radial-gradient(circle, #aaa 2px, #fff 3px); }
.end { margin-left: auto; }

.box { border: 1px solid var(--line); margin: 3px 3px 7px 4px; }
.frame { padding: 3px 2px 4px 1px; }
.line { display: flex; align-items: center; }
.line.top { gap: 2px; margin-bottom: 2px; }
.bin { width: 46px; margin-right: 8px; }
.exp { width: 45px; }
.pair { display: grid; grid-template-columns: 1fr 1fr; gap: 4px; margin: 3px 0 1px; }
.checks { display: flex; align-items: center; gap: 1px; height: 12px; }
.checks label { font-size: 8px; }
.checks label:first-of-type { width: 57px; }
.checks label.dim { font-size: 8px; }

.summary { margin: 0 3px 6px; padding: 0 3px 3px; }
.summary h3 { font: bold 9px/10px "Liberation Sans", sans-serif; text-align: center; }
.dials { display: flex; justify-content: space-between; padding: 0 5px 0 4px; }
.dial { display: grid; place-items: center; }
.dial > * { grid-area: 1 / 1; }
.dial svg { width: 52px; height: 52px; }
.dial b { font: bold 9px/10px "Liberation Sans", sans-serif; }
figcaption { text-align: center; margin-top: 2px; font-size: 7px; }
.counts { display: grid; grid-template-columns: 1fr 1fr; height: 43px; }
.counts dt { display: flex; gap: 2px; font: bold 8px/10px "Liberation Sans", sans-serif; }
.counts dd { display: flex; justify-content: space-between; width: 40px; margin-left: 12px; line-height: 9px; }
.run { width: 83px; height: 17px; }
.summary .run { margin: 0 auto; }

.temp { margin: 0 3px; padding: 0 2px; }
.temp .line { height: 12px; gap: 1px; }
.cooler span { width: 42px; }
.cooler label { width: 30px; gap: 3px; }
.temp .set { height: 15px; gap: 3px; }
.set input { width: 26px; }
.set .btn { width: 28px; margin-left: auto; }
.trio { display: grid; grid-template-columns: 47px 47px 1fr; gap: 4px; margin: 3px 0 2px; }
.trio .btn { height: 14px; }

.desktop { padding: 16px 6px 0 7px; min-width: 0; }
.win { background: var(--face); box-shadow: 0 0 0 1px #b4b4b4, 0 1px 5px #555; }
.win > header { display: flex; align-items: center; gap: 3px; height: 21px; padding: 0 7px 0 4px; background: #fff; color: #999; font-family: var(--ui); }
.win > header h2 { font-size: 8px; font-weight: 400; }
.win > header button { margin-left: auto; color: #aaa; }
.win > header button svg { width: 7px; height: 7px; }
.body { padding: 0 3px 5px; }
.cols { display: grid; grid-template-columns: 118px 199px minmax(0, 1fr); gap: 5px; }
.targets { padding-top: 4px; font-size: 8px; }
.list { height: 72px; padding: 3px 3px 0; background: #fff; border: 1px solid #888; }
.lhead { display: flex; justify-content: space-between; padding-left: 5px; color: #2449b8; line-height: 10px; }
.litem { display: flex; align-items: center; gap: 2px; height: 14px; }
.litem span { flex: 1; background: #f0f0f0; }
.lbtns { display: flex; justify-content: space-between; margin-top: 2px; }
.lbtns .btn { width: 17px; }
.data, .equip { position: relative; height: 93px; padding: 2px 4px 0 2px; }
.row { display: flex; align-items: center; height: 17px; gap: 3px; }
.row > span, .row > label { width: 38px; }
.row em, h4 { font: italic bold 8px/10px "Liberation Sans", sans-serif; }
.row input { width: 93px; }
.row .browse { width: 43px; height: 14px; font-size: 7px; }
.row .sq { width: 20px; height: 14px; }
.btn.more { width: 48px; height: 7px; margin: 1px auto 0; }
.more svg { width: 5px; height: 5px; }
.equip .row > label { width: 44px; }
.equip select { flex: 1; min-width: 0; margin-right: 1px; }
.key, .cog { width: 14px; height: 14px; border: 1px solid #444; background: #ee990f; }
.cog { background: #b4b4b4; }
.key svg, .cog svg { width: 12px; height: 12px; }
.mark { position: absolute; top: 39px; left: 104px; display: flex; align-items: center; opacity: .7; pointer-events: none; }
.mark svg { width: 32px; height: 34px; }
.mark strong { font: 17px/17px Roboto, sans-serif; color: #666; }
.mark small { font: 8px/10px Roboto, sans-serif; color: #666; margin: 22px 0 0 -6px; }

.lower { margin-top: 2px; }
.status, .delay { height: 56px; padding: 0 5px 0 2px; }
.stat { display: flex; align-items: center; gap: 2px; height: 13px; white-space: nowrap; }
.status > progress { margin-top: 5px; }
.prog { display: flex; align-items: center; gap: 7px; padding: 4px 15px 0 5px; font-size: 8px; }
.delay { display: grid; grid-template-columns: 1fr 92px; padding-right: 2px; }
.drow { display: flex; align-items: center; height: 14px; gap: 2px; }
label.drow { gap: 4px; }
.drow > label { width: 49px; }
.drow input[type=number] { width: 28px; height: 13px; }

table { width: 100%; margin-top: 3px; table-layout: fixed; border-collapse: collapse; font-size: 8px; }
th, td { border: 1px solid #aaa; height: 21px; text-align: center; padding: 0 2px; }
th { height: 20px; font: bold 8px/10px "Liberation Sans", sans-serif; background: #fafafa; padding: 0; }
td input[type=checkbox], td select, td progress, td input[type=number] { display: block; margin: 0 auto; }
td select, td input[type=number] { width: 100%; }
td progress { height: 9px; }
.c-ev { width: 48px; } .c-fl { width: 54px; } .c-run { width: 24px; } .c-type { width: 40px; } .c-fil { width: 44px; }
.c-suf { width: 54px; } .c-exp { width: 44px; } .c-bin { width: 38px; } .c-rep { width: 39px; } .c-num { width: 45px; }
.ev { display: flex; align-items: center; gap: 2px; }
.ev .ic { width: 9px; height: 9px; }
.ud { width: 8px; height: 16px; margin-right: 2px; }
.hic { display: flex; justify-content: space-around; }
.flags { width: 48px; height: 16px; }
.body > footer { display: flex; justify-content: space-between; margin-top: 4px; }
.add { width: 83px; }
.tri { width: 6px; height: 6px; margin-left: 4px; }
footer .btn.run { height: 15px; }

.wheel { display: flex; justify-content: space-between; align-items: center; margin: 3px 3px 2px; padding: 3px 4px; }
.cur { display: flex; gap: 1px; white-space: pre; }
.cur b { font: bold 8px/10px "Liberation Sans", sans-serif; margin-left: 1px; }
.setpos { display: flex; gap: 4px; margin-top: 2px; }
.setpos select { width: 61px; }
.setpos .btn { width: 27px; height: 14px; }
.knob { width: 32px; height: 32px; border-radius: 50%; border: 2px solid #222; background: radial-gradient(circle at 50% 30%, #777, #222 75%); color: #fff; font: bold 9px/28px "Liberation Sans", sans-serif; text-align: center; box-shadow: 0 0 2px #333; }
.hist { margin: 0 3px 3px; padding: 0 5px 3px 4px; }
.opts { display: flex; align-items: center; height: 11px; }
.opts label { font-size: 8px; }
.plot { height: 41px; background: #000; }
.wht, .blk { width: 7px; height: 5px; }
.wht { margin: 1px -3px 1px auto; }
.ramp { height: 8px; border: 1px solid #333; background: linear-gradient(90deg, #000, #fff); }
.blk { margin-left: -3px; }
.bw { display: flex; justify-content: space-between; margin-top: 2px; }
.foot { margin: auto 0 1px; }

.statusbar { display: flex; align-items: center; height: 14px; padding-right: 9px; font: 8px/10px var(--ui); background: #f3f3f3; }
.statusbar progress { width: 99px; height: 12px; }
.ready { margin: 0 auto 0 3px; }
.statusbar div { display: flex; align-items: center; gap: 2px; padding: 0 1px 0 3px; border-left: 1px solid #bbb; }
```
